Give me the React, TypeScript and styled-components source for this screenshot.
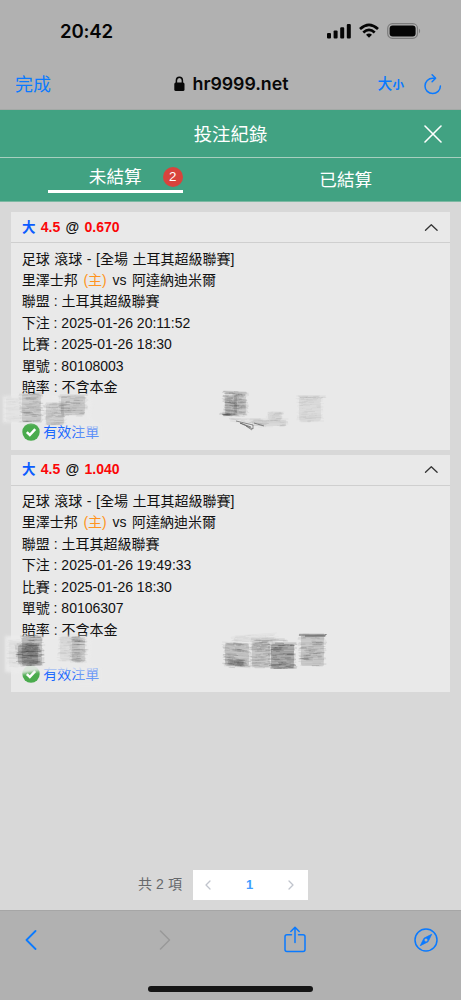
import React from 'react';
import styled, { createGlobalStyle } from 'styled-components';

const GlobalStyle = createGlobalStyle`
  * { box-sizing: border-box; }
  body { margin: 0; background: #d8d8d8; font-family: "Liberation Sans", "Noto Sans CJK TC", sans-serif; }
  button { border: 0; padding: 0; background: none; font: inherit; color: inherit; }
  svg { display: block; }
`;

const Screen = styled.div`
  width: 461px;
  height: 1000px;
  display: flex;
  flex-direction: column;
  overflow: hidden;
  background: #d8d8d8;
`;

const StatusBar = styled.header`
  height: 58px;
  flex: none;
  display: flex;
  justify-content: space-between;
  align-items: center;
  padding: 4px 40px 0 60px;
  background: #b1b1b1;
`;

const Clock = styled.span`
  font: 600 18.6px/24px Inter, sans-serif;
  letter-spacing: -0.15px;
  color: #050505;
`;

const StatusIcons = styled.div`
  display: flex;
  align-items: center;
  gap: 8px;
`;

const AddressBar = styled.nav`
  height: 52px;
  flex: none;
  display: grid;
  grid-template-columns: 1fr auto 1fr;
  align-items: center;
  padding: 0 19px 0 15px;
  border-bottom: 1px solid #a3a9a6;
  background: #b1b1b1;
  color: #0a7aff;
`;

const DoneButton = styled.button`
  justify-self: start;
  font-size: 18px;
  line-height: 24px;
  padding-bottom: 2px;
  font-family: "Noto Sans CJK TC", sans-serif;
`;

const Address = styled.div`
  display: flex;
  align-items: center;
  gap: 8px;
  padding-left: 5px;
  color: #080808;
  font: 600 17.8px/24px Inter, sans-serif;
  letter-spacing: -0.05px;
`;

const BarActions = styled.div`
  justify-self: end;
  display: flex;
  align-items: center;
  gap: 19px;
`;

const TextSize = styled.button`
  font: 500 14.8px/20px "Noto Sans CJK TC", sans-serif;
  small { font-size: 11.6px; font-weight: 700; }
`;

const TitleBar = styled.div`
  height: 48px;
  flex: none;
  display: grid;
  grid-template-columns: 1fr auto 1fr;
  align-items: center;
  padding: 0 19px;
  border-bottom: 1px solid #a7cfbf;
  background: #41a282;
  color: #fff;
`;

const Title = styled.h1`
  grid-column: 2;
  margin: 0;
  padding-bottom: 2px;
  font: 400 18.4px/26px "Noto Sans CJK TC", sans-serif;
`;

const CloseButton = styled.button`
  justify-self: end;
`;

const Tabs = styled.div`
  height: 44px;
  flex: none;
  display: grid;
  grid-template-columns: 1fr 1fr;
  justify-items: center;
  border-bottom: 1px solid #7db9a3;
  background: #41a282;
`;

const Tab = styled.button<{ $active?: boolean }>`
  position: relative;
  width: 135px;
  height: ${p => (p.$active ? 35 : 40)}px;
  border-bottom: ${p => (p.$active ? '3px solid #fff' : '0')};
  padding-bottom: ${p => (p.$active ? '0' : '1px')};
  padding-top: ${p => (p.$active ? '4px' : '2px')};
  color: #fff;
  font: 400 17.6px/26px "Noto Sans CJK TC", sans-serif;
`;

const Badge = styled.span`
  position: absolute;
  right: 0;
  top: 9px;
  width: 20px;
  height: 20px;
  border-radius: 50%;
  background: #d8433c;
  font: 13.4px/20px "Liberation Sans", sans-serif;
  text-align: center;
`;

const Records = styled.main`
  flex: 1;
  display: flex;
  flex-direction: column;
  gap: 5px;
  padding: 10px 11px 10px;
`;

const Card = styled.article`
  position: relative;
  height: 237.5px;
  flex: none;
  background: #e9e9e9;
`;

const CardHeader = styled.div`
  height: 31px;
  display: flex;
  align-items: center;
  justify-content: space-between;
  padding: 0 12px 0 11px;
  border-bottom: 1px solid #cfcfcf;
`;

const Pick = styled.div`
  font-size: 14px;
  line-height: 22px;
  font-weight: 700;
  color: #fb0707;
  white-space: pre;
  word-spacing: 1.4px;
`;

const Side = styled.span`
  color: #0b5cff;
  font-size: 13.5px;
`;

const At = styled.span`
  color: #111;
`;

const Details = styled.div`
  padding: 5.5px 11px 0 10.7px;
`;

const Line = styled.p<{ $gap?: number }>`
  margin: 0;
  height: 21.43px;
  font-size: 14px;
  line-height: 21.43px;
  word-spacing: ${p => p.$gap ?? 0}px;
  color: #111;
  white-space: pre;
`;

const Home = styled.span`
  color: #ff9420;
`;

const Validity = styled.div`
  height: 22px;
  margin-top: 22.5px;
  display: flex;
  align-items: center;
  gap: 3.5px;
  font-size: 14px;
  line-height: 22px;
  color: #1b68ff;
`;

const Scribbles = styled.svg`
  position: absolute;
  left: -11px;
  top: 0;
  pointer-events: none;
`;

const Pagination = styled.div`
  margin-top: auto;
  display: flex;
  align-items: center;
  gap: 11px;
  padding-left: 127px;
`;

const Total = styled.span`
  width: 44px;
  padding-bottom: 2px;
  font-size: 14px;
  line-height: 22px;
  letter-spacing: 0.1px;
  color: #66686b;
  white-space: nowrap;
`;

const Pager = styled.div`
  width: 115px;
  height: 30px;
  display: flex;
  align-items: center;
  justify-content: space-between;
  padding: 0 13px 0 11px;
  background: #fff;
  color: #409eff;
  font: 700 13px/30px "Liberation Sans", sans-serif;
`;

const BottomBar = styled.footer`
  height: 90px;
  flex: none;
  display: flex;
  flex-direction: column;
  align-items: center;
  justify-content: space-between;
  border-top: 1px solid #a6a6a6;
  padding-bottom: 8px;
  background: #b1b1b1;
`;

const Tools = styled.div`
  width: 100%;
  height: 58px;
  display: grid;
  grid-template-columns: 134px 125px 130px auto;
  align-items: center;
  padding: 0 0 0 25px;
`;

const ShareSlot = styled.div`
  padding-bottom: 2px;
`;

const HomeIndicator = styled.div`
  width: 165px;
  height: 6px;
  border-radius: 3px;
  background: #151515;
`;

const Chevron = ({ w, h, d, color, sw }: { w: number; h: number; d: string; color: string; sw: number }) => (
  <svg width={w} height={h} viewBox={`0 0 ${w} ${h}`} fill="none" stroke={color} strokeWidth={sw} strokeLinecap="round" strokeLinejoin="round">
    <path d={d} />
  </svg>
);

/* One shaded patch: x, y, width, height, darkness, slant of its right end */
type Patch = [number, number, number, number, number, number?];

const noise = (seed: number) => {
  let s = seed;
  return () => {
    s = (s * 16807) % 2147483647;
    return s / 2147483647;
  };
};

const Shading = ({ patches, seed }: { patches: Patch[]; seed: number }) => {
  const rnd = noise(seed);
  return (
    <>
      {patches.map(([x, y, w, h, dark, slant = 0], i) => (
        <g key={i} stroke="#333" fill="none" strokeLinecap="round">
          <rect x={x + 2} y={y + 1} width={w - 4} height={h - 2} rx="2" fill="#444" stroke="none" opacity={dark * 0.36} />
          {Array.from({ length: Math.round(h * 0.8) }, (_, k) => {
            const ly = y + k / 0.8;
            const a = x + rnd() * 4 - 1;
            const b = x + w - rnd() * 5 + 1;
            return <path key={k} d={`M${a} ${ly} L${b} ${ly + slant}`} strokeWidth={0.9} opacity={dark * (0.12 + rnd() * 0.34)} />;
          })}
          {Array.from({ length: Math.round(h * 2.2) }, (_, k) => {
            const u = rnd();
            const len = 3 + rnd() * 7;
            const a = x + u * (w - len);
            const ly = y + rnd() * h + slant * u;
            return <path key={`s${k}`} d={`M${a} ${ly} l${len} ${slant * len / w + rnd() * 0.6 - 0.3}`} strokeWidth={0.8 + rnd() * 0.4} opacity={dark * (0.12 + rnd() * 0.33)} />;
          })}
        </g>
      ))}
    </>
  );
};

interface Bet {
  odds: string;
  placed: string;
  id: string;
  patches: Patch[];
  seed: number;
  smear: string;
  fade: number;
}

const bets: Bet[] = [
  {
    odds: '0.670', placed: '2025-01-26 20:11:52', id: '80108003', seed: 731, fade: 0.4,
    smear: 'M3 184 L92 183 L90 206 L102 216 L85 215 L55 211 L3 211Z',
    patches: [
      [4, 184, 19, 27, 0.06], [20, 181, 23, 30, 0.34], [44, 191, 22, 23, 0.28], [59, 183, 28, 21, 0.34],
      [223, 179, 26, 4, 0.5, 1], [223, 183, 16, 21, 0.5, 1], [220, 201, 12, 3, 0.7], [232, 182, 16, 22, 0.36, 1],
      [229, 205, 34, 4, 0.15, 5], [250, 207, 38, 8, 0.2], [266, 200, 18, 9, 0.14], [297, 184, 29, 2, 0.2], [297, 184, 26, 26, 0.13],
    ],
  },
  {
    odds: '1.040', placed: '2025-01-26 19:49:33', id: '80106307', seed: 1943, fade: 0.5,
    smear: 'M5 181 L92 181 L89 209 L102 214 L85 215 L39 216 L22 219 L5 217Z',
    patches: [
      [7, 185, 16, 27, 0.07], [20, 181, 24, 31, 0.5, -1], [16, 189, 24, 21, 0.7], [58, 180, 24, 26, 0.12], [70, 182, 17, 26, 0.32],
      [223, 187, 28, 25, 0.42, 2], [226, 204, 20, 7, 0.5, 1], [250, 186, 22, 27, 0.4], [269, 188, 27, 26, 0.75], [299, 179, 27, 33, 0.38], [232, 181, 46, 7, 0.1, -3], [252, 184, 36, 3, 0.3],
    ],
  },
];

const BetCard = ({ bet }: { bet: Bet }) => (
  <Card>
    <CardHeader>
      <Pick><Side>大</Side> 4.5 <At>@</At> {bet.odds}</Pick>
      <Chevron w={14} h={9} d="M1.5 7.3 L7.3 1.8 L13.1 7.3" color="#333" sw={1.3} />
    </CardHeader>
    <Details>
      <Line $gap={0.7}>足球 滾球 - [全場 土耳其超級聯賽]</Line>
      <Line $gap={1.8}>里澤士邦 <Home>(主)</Home> vs 阿達納迪米爾</Line>
      <Line $gap={0.1}>聯盟 : 土耳其超級聯賽</Line>
      <Line>下注 : {bet.placed}</Line>
      <Line>比賽 : 2025-01-26 18:30</Line>
      <Line>單號 : {bet.id}</Line>
      <Line $gap={0.1}>賠率 : 不含本金</Line>
      <Validity>
        <svg width="18" height="18" viewBox="0 0 18 18">
          <circle cx="9" cy="9" r="8.7" fill="#4aab4d" />
          <path d="M4.8 9.2 L7.8 12 L13.2 6.1" fill="none" stroke="#fff" strokeWidth="2.5" />
        </svg>
        有效注單
      </Validity>
    </Details>
    <Scribbles width="461" height="237" viewBox="0 0 461 237">
      <defs>
        <filter id={`soft${bet.seed}`} x="-10%" y="-20%" width="120%" height="140%">
          <feGaussianBlur stdDeviation="1.6" />
        </filter>
        <filter id={`pencil${bet.seed}`} x="-2%" y="-5%" width="104%" height="110%">
          <feGaussianBlur stdDeviation="0.5" />
        </filter>
      </defs>
      <path d={bet.smear} fill="#ebebeb" opacity={0.9} filter={`url(#soft${bet.seed})`} />
      <rect x="77" y="212" width="24" height="19" fill="#ebebeb" opacity={bet.fade * 0.75} filter={`url(#soft${bet.seed})`} />
      <g filter={`url(#pencil${bet.seed})`}>
        <Shading patches={bet.patches} seed={bet.seed} />
        {bet.seed === 731 && (
          <path d="M236 209 L253 213 L253 217 L240 211 L251 215 M246 214 L252 218 M254 211 L264 214" fill="none" stroke="#555" strokeWidth="1" opacity="0.65" />
        )}
        {bet.seed === 1943 && <path d="M299 180 L326 180 L326 179 M305 181 L325 181" fill="none" stroke="#666" strokeWidth="1" />}
      </g>
    </Scribbles>
  </Card>
);

export default function App() {
  return (
    <Screen>
      <GlobalStyle />
      <StatusBar>
        <Clock>20:42</Clock>
        <StatusIcons>
          <svg width="24" height="16" viewBox="0 0 24 16" fill="#050505">
            <rect x="0" y="10" width="4" height="5.5" rx="1.1" />
            <rect x="6.6" y="7.5" width="4" height="8" rx="1.1" />
            <rect x="13.2" y="4.3" width="4" height="11.2" rx="1.1" />
            <rect x="19.8" y="1" width="4" height="14.5" rx="1.1" />
          </svg>
          <svg width="20" height="16" viewBox="0 0 20 16" fill="none" stroke="#050505" strokeWidth="2.7">
            <path d="M1 6 Q10 -2.2 19 6" />
            <path d="M4.3 9.4 Q10 4.3 15.7 9.4" />
            <path d="M7 11.7 Q10 9.2 13 11.7 L10 14.8Z" fill="#050505" stroke="none" />
          </svg>
          <svg width="34" height="16" viewBox="0 0 34 16">
            <rect x="0.7" y="0.7" width="29.8" height="14.6" rx="4.7" fill="none" stroke="#7c7c7c" strokeWidth="1.2" />
            <rect x="2.6" y="2.6" width="26" height="10.8" rx="3" fill="#050505" />
            <path d="M32 5.5 Q34.3 8 32 10.5Z" fill="#7c7c7c" />
          </svg>
        </StatusIcons>
      </StatusBar>
      <AddressBar>
        <DoneButton>完成</DoneButton>
        <Address>
          <svg width="11" height="16" viewBox="0 0 11 16">
            <rect x="0.3" y="6.6" width="10.2" height="8.4" rx="1.5" fill="#080808" />
            <path d="M2.4 7.5 V4.5 A3 3.3 0 0 1 8.4 4.5 V7.5" fill="none" stroke="#080808" strokeWidth="1.5" />
          </svg>
          hr9999.net
        </Address>
        <BarActions>
          <TextSize>大<small>小</small></TextSize>
          <svg width="19" height="22" viewBox="0 0 19 22" fill="none" stroke="#0a7aff" strokeWidth="1.5" strokeLinecap="round" strokeLinejoin="round">
            <path d="M12.2 5.2 H9.7 A7.7 7.7 0 1 0 17.4 12.9" />
            <path d="M9.1 1.7 L12.6 5.2 L9.1 8.7" />
          </svg>
        </BarActions>
      </AddressBar>
      <TitleBar>
        <Title>投注紀錄</Title>
        <CloseButton>
          <Chevron w={18} h={18} d="M1 1 L17 17 M17 1 L1 17" color="#fff" sw={1.6} />
        </CloseButton>
      </TitleBar>
      <Tabs>
        <Tab $active>未結算<Badge>2</Badge></Tab>
        <Tab>已結算</Tab>
      </Tabs>
      <Records>
        {bets.map(bet => <BetCard key={bet.id} bet={bet} />)}
        <Pagination>
          <Total>共 2 項</Total>
          <Pager>
            <Chevron w={8} h={10} d="M6 1 L2 5 L6 9" color="#c0c4cc" sw={1.3} />
            1
            <Chevron w={8} h={10} d="M2 1 L6 5 L2 9" color="#c0c4cc" sw={1.3} />
          </Pager>
        </Pagination>
      </Records>
      <BottomBar>
        <Tools>
          <Chevron w={12} h={20} d="M10.5 1 L1.5 10 L10.5 19" color="#0a7aff" sw={1.8} />
          <Chevron w={12} h={20} d="M1.5 1 L10.5 10 L1.5 19" color="#999" sw={1.5} />
          <ShareSlot>
            <svg width="22" height="27" viewBox="0 0 22 27" fill="none" stroke="#0a7aff" strokeWidth="1.5" strokeLinecap="round" strokeLinejoin="round">
              <path d="M7.5 8.8 H3 A2 2 0 0 0 1 10.8 V23.5 A2 2 0 0 0 3 25.5 H19 A2 2 0 0 0 21 23.5 V10.8 A2 2 0 0 0 19 8.8 H14.5" />
              <path d="M11 16.5 V1.5 M6.8 5.5 L11 1.3 L15.2 5.5" />
            </svg>
          </ShareSlot>
          <svg width="24" height="24" viewBox="0 0 24 24" fill="none" stroke="#0a7aff" strokeWidth="1.5">
            <circle cx="12" cy="12" r="11" />
            <path d="M17.7 6.3 L14 13.8 L6.3 17.7 L10 10.2Z" fill="#0a7aff" stroke="#0a7aff" strokeWidth="0.8" strokeLinejoin="round" />
            <circle cx="12" cy="12" r="1.5" fill="#b1b1b1" stroke="none" />
          </svg>
        </Tools>
        <HomeIndicator />
      </BottomBar>
    </Screen>
  );
}
